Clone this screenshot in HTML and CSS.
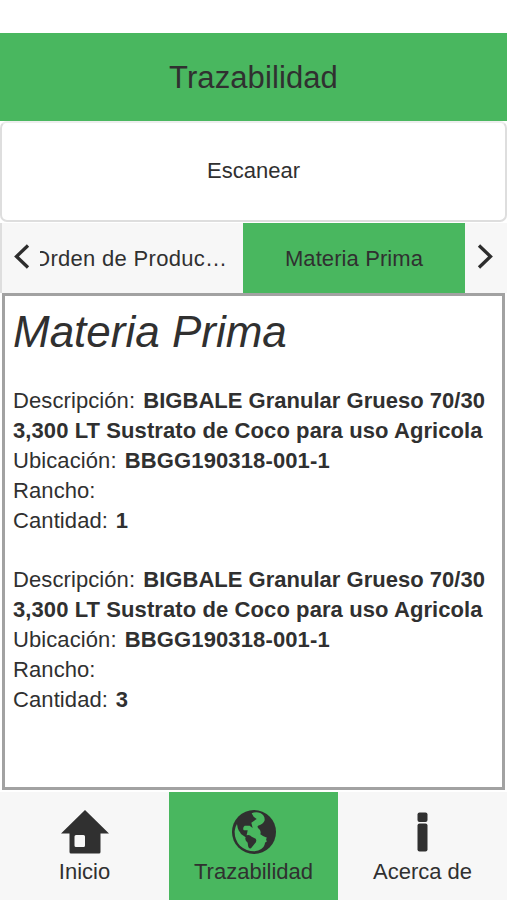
FILE: index.html
```html
<!DOCTYPE html>
<html lang="es">
<head>
<meta charset="utf-8">
<title>Trazabilidad</title>
<link rel="stylesheet" href="styles.css">
</head>
<body>
<div class="app">
  <header class="header"><h1 class="title">Trazabilidad</h1></header>
  <button class="scan">Escanear</button>
  <nav class="tabs">
    <svg class="arrow arrow-prev" viewBox="0 0 16 25"><path d="M14 1.500 2.500 12.500 14 23.500"/></svg>
    <div class="tab tab-prev"><span class="tab-label">Orden de Produc…</span></div>
    <div class="tab tab-active">Materia Prima</div>
    <svg class="arrow arrow-next" viewBox="0 0 16 25"><path d="M2 1.500 13.500 12.500 2 23.500"/></svg>
  </nav>
  <main class="content">
    <h2 class="heading">Materia Prima</h2>
    <section class="record">
      <p>Descripción: <b class="name">BIGBALE Granular Grueso 70/30</b></p>
      <p><b>3,300 LT Sustrato de Coco para uso Agricola</b></p>
      <p>Ubicación: <b class="code">BBGG190318-001-1</b></p>
      <p>Rancho:</p>
      <p>Cantidad: <b class="count">1</b></p>
    </section>
    <section class="record">
      <p>Descripción: <b class="name">BIGBALE Granular Grueso 70/30</b></p>
      <p><b>3,300 LT Sustrato de Coco para uso Agricola</b></p>
      <p>Ubicación: <b class="code">BBGG190318-001-1</b></p>
      <p>Rancho:</p>
      <p>Cantidad: <b class="count">3</b></p>
    </section>
  </main>
  <footer class="bottom">
    <div class="item">
      <svg class="icon" viewBox="0 0 48 46"><path fill-rule="evenodd" d="M24 1 48 24.500H39.500V43q0 1.500-1.500 1.500H10q-1.500 0-1.500-1.500V24.500H0ZM15 26q-1.500 0-1.500 1.500v9q0 1.500 1.500 1.500h7.500q1.500 0 1.500-1.500v-9q0-1.500-1.500-1.500Z"/></svg>
      <span>Inicio</span>
    </div>
    <div class="item item-active">
      <svg class="icon" viewBox="0 0 48 46"><g transform="translate(-65 -28.700) scale(.33333)"><circle cx="267" cy="155" r="66"/><path class="sea" d="M260 99Q273 93 286 98Q300 105 299 120Q296 131 279 136Q275 140 283 147Q289 154 286 162Q292 168 306 172Q301 177 306 183Q298 187 299 193Q294 209 268 213Q244 213 225 196Q208 178 209 152Q211 138 216 131Q217 142 222 152Q231 160 246 160L248 150H236Q232 142 239 136H254L263 143L259 127L275 116L266 109Z"/><path d="M222 150 234 150 246 158 245 165Q254 162 260 169L272 175Q277 183 269 190L258 204Q250 206 249 195L248 187Q238 179 242 171L228 161Z"/></g></svg>
      <span>Trazabilidad</span>
    </div>
    <div class="item">
      <svg class="icon" viewBox="0 0 48 46"><rect x="18.500" y="3.500" width="10" height="9.500" rx="2"/><rect x="18.500" y="14.500" width="10" height="28" rx="2"/></svg>
      <span>Acerca de</span>
    </div>
  </footer>
</div>
</body>
</html>
```

FILE: styles.css
```css
* { box-sizing: border-box; margin: 0; padding: 0; }
body { background: #fff; color: #303030; font-family: "Liberation Sans", Arial, sans-serif; font-size: 22px; }
.app { width: 507px; height: 900px; padding-top: 33px; display: flex; flex-direction: column; overflow: hidden; background: #fff; }
.header { height: 88px; flex: none; background: #49b75f; display: flex; align-items: center; justify-content: center; }
.title { font-size: 31px; font-weight: 400; line-height: 36px; letter-spacing: .1px; padding-top: 2px; }
.scan { height: 101px; flex: none; background: #fff; border: 2px solid #dedede; border-top-color: #eee; border-radius: 7px; font: inherit; color: inherit; padding-bottom: 2px; }
.tabs { height: 70px; flex: none; margin-top: 1px; border-left: 2px solid #dedede; background: #f7f7f7; display: flex; align-items: stretch; }
.arrow { width: 16px; height: 25px; flex: none; margin-top: 21px; fill: none; stroke: #2d2d2d; stroke-width: 3.300; }
.arrow-prev { margin-left: 12px; margin-right: 10px; }
.arrow-next { margin-left: 12px; }
.tab { line-height: 71px; white-space: nowrap; overflow: hidden; }
.tab-prev { width: 203px; }
.tab-label { margin-left: -7px; letter-spacing: .3px; }
.tab-active { width: 222px; background: #49b75f; text-align: center; letter-spacing: .1px; }
.content { height: 497px; flex: none; margin: 0 2px; border: 3px solid #a2a2a2; background: #fff; padding: 9px 8px 0; }
.heading { font-size: 44px; font-weight: 400; font-style: italic; line-height: 54px; margin-bottom: 27px; }
.record { line-height: 30px; margin-bottom: 29px; white-space: nowrap; letter-spacing: .09px; }
.name { margin-left: 2px; letter-spacing: .02px; }
.code { margin-left: 2px; letter-spacing: .12px; }
.count { margin-left: 1.5px; }
.bottom { flex: 1; margin-top: 2px; display: flex; background: #f7f7f7; }
.item { flex: 1; display: flex; flex-direction: column; align-items: center; padding-top: 17px; line-height: 28px; }
.item-active { background: #49b75f; }
.icon { width: 48px; height: 46px; margin-bottom: 3px; fill: #303030; }
.sea { fill: #49b75f; }
```
